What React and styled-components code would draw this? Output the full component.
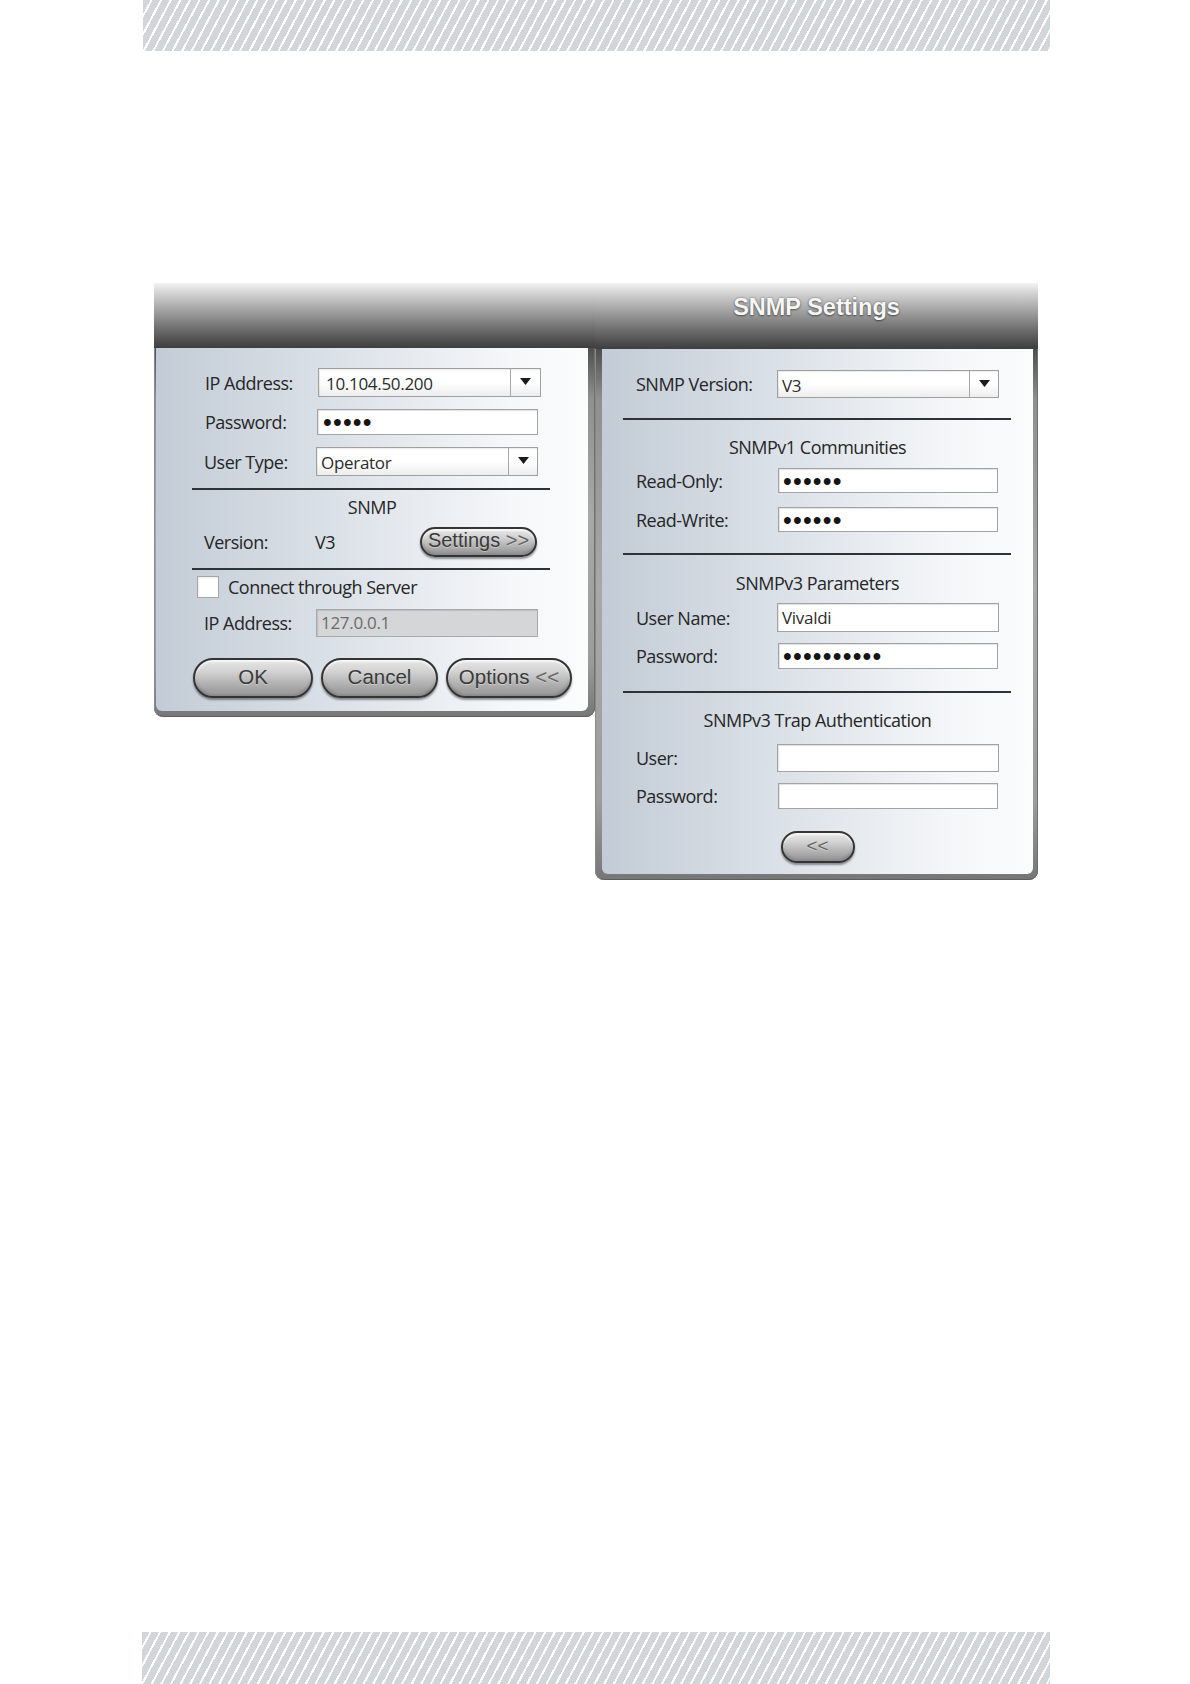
import React from "react";
import styled, { createGlobalStyle } from "styled-components";

const GlobalStyle = createGlobalStyle`
  html, body { margin: 0; padding: 0; background: #ffffff; }
  body { font-family: "Open Sans", "Noto Sans", "DejaVu Sans", sans-serif; color: #262626; }
  * { box-sizing: border-box; }
`;

const Page = styled.div`
  width: 1190px;
  height: 1684px;
  display: flex;
  flex-direction: column;
  background: #ffffff;
  overflow: hidden;
`;

const HatchBand = styled.div`
  flex: none;
  margin-left: ${(p) => p.$left}px;
  margin-top: ${(p) => (p.$pushDown ? "auto" : "0")};
  width: ${(p) => p.$width}px;
  height: ${(p) => p.$height}px;
  background-color: #d2d6d8;
  background-image: repeating-linear-gradient(
    118deg,
    #d2d6d8 0px,
    #d2d6d8 6.5px,
    #ffffff 6.5px,
    #ffffff 8.5px
  );
`;

const Stage = styled.div`
  flex: none;
  display: flex;
  align-items: flex-start;
  margin: 232px 0 0 154px;
`;

const Panel = styled.section`
  flex: none;
  width: ${(p) => p.$width}px;
  display: flex;
  flex-direction: column;
`;

const TitleBar = styled.header`
  height: ${(p) => p.$height}px;
  display: flex;
  justify-content: center;
  align-items: flex-start;
  padding-top: 10px;
  background: linear-gradient(
    to bottom,
    #f3f3f3 0%,
    #d2d2d2 16%,
    #a6a6a6 40%,
    #767676 66%,
    #4d4d4d 90%,
    #3e3e3e 100%
  );
`;

const Title = styled.h1`
  margin: 0;
  font-family: "Liberation Sans", Arial, sans-serif;
  font-weight: 700;
  font-size: 23.5px;
  line-height: 28px;
  color: #f6f6f6;
  text-shadow: 0 0 2px rgba(0, 0, 0, 0.45), 0 1px 2px rgba(0, 0, 0, 0.4);
`;

const Frame = styled.div`
  padding: 0 ${(p) => p.$right}px 6px ${(p) => p.$left}px;
  border-radius: 0 0 9px 9px;
  background: linear-gradient(
    to bottom,
    #4e4e4e 0px,
    #8f8f8f 50px,
    #a8a8a8 45%,
    #9c9c9c 85%,
    #767676 100%
  );
  box-shadow: inset -1px 0 0 #6e6e6e, inset 1px 0 0 #8a8a8a,
    inset 0 -1px 0 #5e5e5e;
`;

const Body = styled.div`
  height: ${(p) => p.$height}px;
  display: flex;
  flex-direction: column;
  border-radius: 0 0 6px 6px;
  background: linear-gradient(
    to right,
    #c3ccd6 0%,
    #d3dae2 28%,
    #e6eaef 58%,
    #f5f7f9 82%,
    #fbfcfc 100%
  );
`;

const Row = styled.div`
  flex: none;
  display: flex;
  align-items: center;
  height: ${(p) => p.$h}px;
  margin-top: ${(p) => p.$mt}px;
  padding-left: ${(p) => p.$pl}px;
`;

const CenterRow = styled.div`
  flex: none;
  display: flex;
  justify-content: center;
  height: ${(p) => p.$h}px;
  margin-top: ${(p) => p.$mt}px;
`;

const Label = styled.span`
  flex: none;
  width: ${(p) => p.$w}px;
  font-size: 18px;
  letter-spacing: -0.5px;
  line-height: 24px;
  color: #262626;
  white-space: nowrap;
`;

const Divider = styled.hr`
  flex: none;
  margin: ${(p) => p.$mt}px 0 0 ${(p) => p.$ml}px;
  width: ${(p) => p.$w}px;
  height: 2px;
  border: 0;
  background: #2e3338;
`;

const SectionTitle = styled.h2`
  flex: none;
  margin: ${(p) => p.$mt}px 0 0;
  height: 24px;
  font-size: 18px;
  letter-spacing: -0.5px;
  line-height: 24px;
  font-weight: 400;
  text-align: center;
  color: #262626;
`;

const Field = styled.div`
  flex: none;
  width: ${(p) => p.$w}px;
  height: 100%;
  display: flex;
  align-items: center;
  padding-left: ${(p) => p.$pad}px;
  border: 1px solid ${(p) => (p.$disabled ? "#a9a9a9" : "#a3a3a3")};
  background: ${(p) => (p.$disabled ? "#d5d6d7" : "#ffffff")};
  box-shadow: inset 1px 1px 1px rgba(0, 0, 0, 0.12);
  font-size: 17px;
  line-height: 20px;
  letter-spacing: -0.3px;
  color: ${(p) => (p.$disabled ? "#6b6b6b" : "#2c2c2c")};
  overflow: hidden;
  white-space: nowrap;
`;

const Dots = styled.span`
  display: inline-block;
  font-family: "Liberation Sans", Arial, sans-serif;
  font-size: 25px;
  letter-spacing: 1.2px;
  line-height: 20px;
  height: 20px;
  color: #151515;
`;

const Combo = styled.div`
  flex: none;
  width: ${(p) => p.$w}px;
  height: 100%;
  display: flex;
  border: 1px solid #a0a0a0;
  background: linear-gradient(to bottom, #ffffff 0%, #ffffff 50%, #ededed 100%);
  box-shadow: inset 1px 1px 1px rgba(0, 0, 0, 0.08);
`;

const ComboValue = styled.span`
  flex: 1;
  display: flex;
  align-items: center;
  padding: 3px 0 0 ${(p) => p.$pad}px;
  font-size: 17px;
  line-height: 22px;
  letter-spacing: -0.3px;
  color: #2c2c2c;
  white-space: nowrap;
  overflow: hidden;
`;

const ComboButton = styled.span`
  flex: none;
  width: ${(p) => p.$w}px;
  display: flex;
  align-items: center;
  justify-content: center;
  padding-bottom: 2px;
  border-left: 1px solid #a8a8a8;
`;

const Value = styled.span`
  flex: none;
  width: ${(p) => p.$w}px;
  font-size: 18px;
  letter-spacing: -0.5px;
  line-height: 24px;
  color: #262626;
`;

const CheckBox = styled.span`
  flex: none;
  width: 22px;
  height: 22px;
  border: 1px solid #a6a6a6;
  background: #ffffff;
  box-shadow: inset 1px 1px 2px rgba(0, 0, 0, 0.08);
`;

const CheckLabel = styled.span`
  margin-left: 9px;
  font-size: 18px;
  letter-spacing: -0.5px;
  line-height: 24px;
  color: #262626;
  white-space: nowrap;
`;

const PillButton = styled.button`
  flex: none;
  width: ${(p) => p.$w}px;
  height: ${(p) => p.$h}px;
  margin: 0 0 0 ${(p) => p.$ml || 0}px;
  padding: 0 0 3px;
  display: flex;
  align-items: center;
  justify-content: center;
  border: 2px solid #343434;
  border-radius: 999px;
  background: linear-gradient(
    to bottom,
    #e6e6e6 0%,
    #d4d4d4 30%,
    #b9b9b9 58%,
    #a0a0a0 85%,
    #acacac 100%
  );
  box-shadow: inset 0 2px 2px rgba(255, 255, 255, 0.75),
    inset 0 -2px 3px rgba(0, 0, 0, 0.22), 0 2px 2px rgba(0, 0, 0, 0.4);
  font-family: "Liberation Sans", Arial, sans-serif;
  font-size: ${(p) => p.$fs || 20.5}px;
  color: #3a3a3a;
  text-shadow: 0 1px 0 rgba(255, 255, 255, 0.35);
  white-space: nowrap;
  cursor: default;
`;

const Muted = styled.span`
  color: #666666;
`;

function Arrow() {
  return (
    <svg width="11" height="7" viewBox="0 0 11 7" aria-hidden="true">
      <polygon points="0,0 11,0 5.5,7" fill="#1b1b1b" />
    </svg>
  );
}

function ComboBox({ w, value, pad, btn }) {
  return (
    <Combo $w={w}>
      <ComboValue $pad={pad}>{value}</ComboValue>
      <ComboButton $w={btn}>
        <Arrow />
      </ComboButton>
    </Combo>
  );
}

function LoginPanel() {
  return (
    <Panel $width={441}>
      <TitleBar $height={65} />
      <Frame $left={2} $right={7}>
        <Body $height={363}>
          <Row $h={29} $mt={20} $pl={49}>
            <Label $w={113}>IP Address:</Label>
            <ComboBox w={223} value="10.104.50.200" pad={7} btn={30} />
          </Row>
          <Row $h={26} $mt={12} $pl={49}>
            <Label $w={112}>Password:</Label>
            <Field $w={221} $pad={5}>
              <Dots>•••••</Dots>
            </Field>
          </Row>
          <Row $h={29} $mt={12} $pl={48}>
            <Label $w={112}>User Type:</Label>
            <ComboBox w={222} value="Operator" pad={4} btn={29} />
          </Row>
          <Divider $mt={12} $ml={36} $w={358} />
          <SectionTitle $mt={5}>SNMP</SectionTitle>
          <Row $h={30} $mt={8} $pl={48}>
            <Label $w={111}>Version:</Label>
            <Value $w={105}>V3</Value>
            <PillButton $w={117} $h={30} $fs={20}>
              <span>
                Settings <Muted>&gt;&gt;</Muted>
              </span>
            </PillButton>
          </Row>
          <Divider $mt={11} $ml={36} $w={358} />
          <Row $h={22} $mt={6} $pl={41}>
            <CheckBox />
            <CheckLabel>Connect through Server</CheckLabel>
          </Row>
          <Row $h={28} $mt={11} $pl={48}>
            <Label $w={112}>IP Address:</Label>
            <Field $w={222} $pad={4} $disabled>
              127.0.0.1
            </Field>
          </Row>
          <Row $h={40} $mt={21} $pl={37}>
            <PillButton $w={120} $h={40}>
              OK
            </PillButton>
            <PillButton $w={117} $h={40} $ml={8}>
              Cancel
            </PillButton>
            <PillButton $w={126} $h={40} $ml={8}>
              <span>
                Options <Muted>&lt;&lt;</Muted>
              </span>
            </PillButton>
          </Row>
        </Body>
      </Frame>
    </Panel>
  );
}

function SettingsPanel() {
  return (
    <Panel $width={443}>
      <TitleBar $height={66}>
        <Title>SNMP Settings</Title>
      </TitleBar>
      <Frame $left={7} $right={5}>
        <Body $height={525}>
          <Row $h={28} $mt={21} $pl={34}>
            <Label $w={141}>SNMP Version:</Label>
            <ComboBox w={222} value="V3" pad={4} btn={29} />
          </Row>
          <Divider $mt={20} $ml={21} $w={388} />
          <SectionTitle $mt={15}>SNMPv1 Communities</SectionTitle>
          <Row $h={25} $mt={9} $pl={34}>
            <Label $w={142}>Read-Only:</Label>
            <Field $w={220} $pad={4}>
              <Dots>••••••</Dots>
            </Field>
          </Row>
          <Row $h={25} $mt={14} $pl={34}>
            <Label $w={142}>Read-Write:</Label>
            <Field $w={220} $pad={4}>
              <Dots>••••••</Dots>
            </Field>
          </Row>
          <Divider $mt={21} $ml={21} $w={388} />
          <SectionTitle $mt={16}>SNMPv3 Parameters</SectionTitle>
          <Row $h={29} $mt={8} $pl={34}>
            <Label $w={141}>User Name:</Label>
            <Field $w={222} $pad={4}>
              Vivaldi
            </Field>
          </Row>
          <Row $h={26} $mt={11} $pl={34}>
            <Label $w={142}>Password:</Label>
            <Field $w={220} $pad={4}>
              <Dots>••••••••••</Dots>
            </Field>
          </Row>
          <Divider $mt={22} $ml={21} $w={388} />
          <SectionTitle $mt={15}>SNMPv3 Trap Authentication</SectionTitle>
          <Row $h={28} $mt={12} $pl={34}>
            <Label $w={141}>User:</Label>
            <Field $w={222} $pad={4} />
          </Row>
          <Row $h={26} $mt={11} $pl={34}>
            <Label $w={142}>Password:</Label>
            <Field $w={220} $pad={4} />
          </Row>
          <CenterRow $h={32} $mt={22}>
            <PillButton $w={74} $h={32} $fs={19}>
              <Muted>&lt;&lt;</Muted>
            </PillButton>
          </CenterRow>
        </Body>
      </Frame>
    </Panel>
  );
}

export default function App() {
  return (
    <>
      <GlobalStyle />
      <Page>
        <HatchBand $left={143} $width={907} $height={51} />
        <Stage>
          <LoginPanel />
          <SettingsPanel />
        </Stage>
        <HatchBand $left={142} $width={908} $height={52} $pushDown />
      </Page>
    </>
  );
}
